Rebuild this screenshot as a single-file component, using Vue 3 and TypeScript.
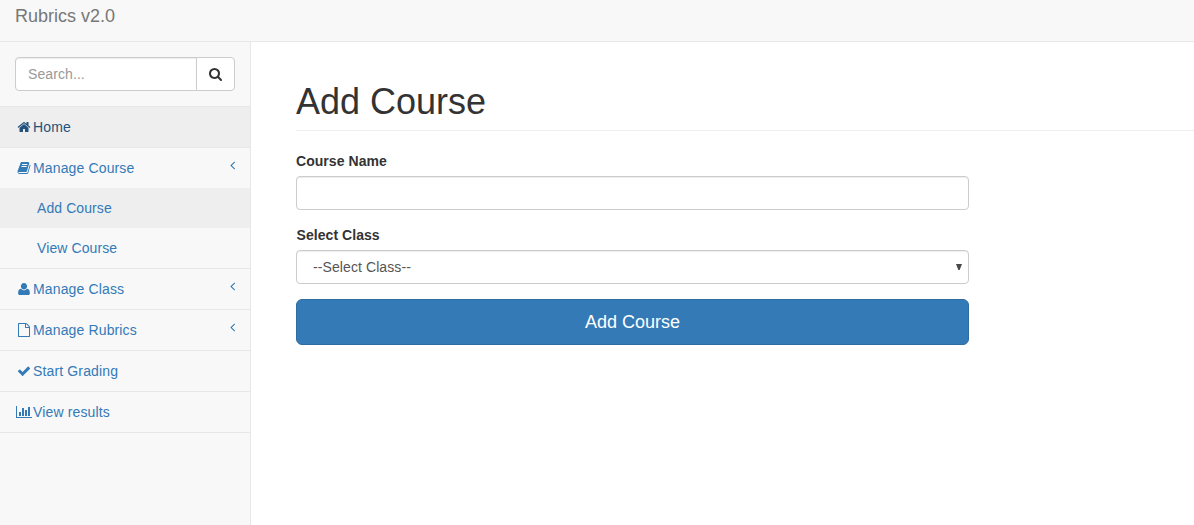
<script setup lang="ts">
import { ref } from 'vue'

interface Icon {
  viewBox: string
  width: number
  path: string
}

interface MenuItem {
  label: string
  icon: Icon
  active?: boolean
  expandable?: boolean
  children?: { label: string; active?: boolean }[]
}

const square = '0 0 1792 1792'

const home: Icon = {
  viewBox: square,
  width: 14,
  path: 'M1472 992v480q0 26-19 45t-45 19h-384v-384h-256v384h-384q-26 0-45-19t-19-45v-480q0-1 .5-3t.5-3l575-474 575 474q1 2 1 6zm223-69l-62 74q-8 9-21 11h-3q-13 0-21-7l-692-577-692 577q-12 8-24 7-13-2-21-11l-62-74q-8-10-7-23.5t11-21.5l719-599q32-26 76-26t76 26l244 204v-195q0-14 9-23t23-9h192q14 0 23 9t9 23v408l219 182q10 8 11 21.5t-7 23.5z',
}
const book: Icon = {
  viewBox: square,
  width: 14,
  path: 'M1703 478q40 57 18 129l-275 906q-19 64-76.5 107.5t-122.5 43.5h-923q-77 0-148.5-53.5t-99.5-131.5q-24-67-2-127 0-4 3-27t4-37q1-8-3-21.5t-3-19.5q2-11 8-21t16.5-23.5 16.5-23.5q23-38 45-91.5t30-91.5q3-10 .5-30t-.5-28q3-11 17-28t17-23q21-36 42-92t25-90q1-9-2.5-32t.5-28q4-13 22-30.5t22-22.5q19-26 42.5-84.5t27.5-96.5q1-8-3-25.5t-2-26.5q2-8 9-18t18-23 17-21q8-12 16.5-30.5t15-35 16-36 19.5-32 26.5-23.5 36-11.5 47.5 5.5l-1 3q38-9 51-9h761q74 0 114 56t18 130l-274 906q-36 119-71.5 153.5t-128.5 34.5h-869q-27 0-38 15-11 16-1 43 24 70 144 70h923q29 0 56-15.5t35-41.5l300-987q7-22 5-57 38 15 59 43zm-1064 2q-4 13 2 22.5t20 9.5h608q13 0 25.5-9.5t16.5-22.5l21-64q4-13-2-22.5t-20-9.5h-608q-13 0-25.5 9.5t-16.5 22.5zm-83 256q-4 13 2 22.5t20 9.5h608q13 0 25.5-9.5t16.5-22.5l21-64q4-13-2-22.5t-20-9.5h-608q-13 0-25.5 9.5t-16.5 22.5z',
}
const user: Icon = {
  viewBox: '0 0 14 14',
  width: 14,
  path: 'M7 1c1.8 0 3.1 1.4 3.1 3.2S8.8 7.5 7 7.5 3.9 6 3.9 4.2 5.2 1 7 1zM4.3 6.7C5 7.7 5.9 8.2 7 8.2s2-.5 2.700-1.500c2.300 0 3.200 1.800 3.200 4.500 0 1.100-.6 1.800-1.600 1.800H2.700c-1 0-1.600-.7-1.600-1.800 0-2.700.9-4.500 3.200-4.500z',
}
const file: Icon = {
  viewBox: square,
  width: 14,
  path: 'M1596 380q28 28 48 76t20 88v1152q0 40-28 68t-68 28h-1344q-40 0-68-28t-28-68v-1600q0-40 28-68t68-28h896q40 0 88 20t76 48zm-444-244v376h376q-10-29-22-41l-313-313q-12-12-41-22zm384 1528v-1024h-416q-40 0-68-28t-28-68v-416h-768v1536h1280z',
}
const check: Icon = {
  viewBox: square,
  width: 14,
  path: 'M1671 566q0 40-28 68l-724 724-136 136q-28 28-68 28t-68-28l-136-136-362-362q-28-28-28-68t28-68l136-136q28-28 68-28t68 28l294 295 656-657q28-28 68-28t68 28l136 136q28 28 28 68z',
}
const chart: Icon = {
  viewBox: '0 0 2048 1792',
  width: 16,
  path: 'M640 896v512h-256v-512h256zm384-512v1024h-256v-1024h256zm1024 1152v128h-2048v-1536h128v1408h1920zm-640-896v768h-256v-768h256zm384-384v1152h-256v-1152h256z',
}

const menu: MenuItem[] = [
  { label: 'Home', icon: home, active: true },
  {
    label: 'Manage Course',
    icon: book,
    expandable: true,
    children: [{ label: 'Add Course', active: true }, { label: 'View Course' }],
  },
  { label: 'Manage Class', icon: user, expandable: true },
  { label: 'Manage Rubrics', icon: file, expandable: true },
  { label: 'Start Grading', icon: check },
  { label: 'View results', icon: chart },
]

const search = ref('')
const courseName = ref('')
const selectedClass = ref('')
</script>

<template>
  <div class="page">
    <header class="navbar"><a class="brand">Rubrics v2.0</a></header>
    <div class="body">
      <nav class="sidebar">
        <div class="search">
          <input v-model="search" class="control search-input" type="text" placeholder="Search..." />
          <button class="search-button" type="button" aria-label="Search">
            <svg width="13" height="14" viewBox="64 0 1664 1792">
              <path d="M1216 832q0-185-131.5-316.5t-316.5-131.5-316.5 131.5-131.5 316.5 131.5 316.5 316.5 131.5 316.5-131.5 131.5-316.5zm512 832q0 52-38 90t-90 38q-54 0-90-38l-343-342q-179 124-399 124-143 0-273.5-55.5t-225-150-150-225-55.5-273.5 55.5-273.5 150-225 225-150 273.5-55.5 273.5 55.5 225 150 150 225 55.5 273.5q0 220-124 399l343 343q37 37 37 90z" />
            </svg>
          </button>
        </div>
        <div v-for="item in menu" :key="item.label" class="item">
          <a class="link" :class="{ active: item.active }">
            <span class="icon">
              <svg :width="item.icon.width" height="14" :viewBox="item.icon.viewBox">
                <path :d="item.icon.path" />
              </svg>
            </span>
            <span>{{ item.label }}</span>
            <svg v-if="item.expandable" class="arrow" width="5" height="14" viewBox="563 0 640 1792">
              <path d="M1203 544q0 13-10 23l-393 393 393 393q10 10 10 23t-10 23l-50 50q-10 10-23 10t-23-10l-466-466q-10-10-10-23t10-23l466-466q10-10 23-10t23 10l50 50q10 10 10 23z" />
            </svg>
          </a>
          <a
            v-for="child in item.children"
            :key="child.label"
            class="sublink"
            :class="{ 'sub-active': child.active }"
          >{{ child.label }}</a>
        </div>
      </nav>
      <main class="content">
        <h1>Add Course</h1>
        <form class="form" @submit.prevent>
          <label for="course-name">Course Name</label>
          <input id="course-name" v-model="courseName" class="control" type="text" />
          <label class="class-label" for="class-select">Select Class</label>
          <div class="select-wrap">
            <select id="class-select" v-model="selectedClass" class="control select">
              <option value="">--Select Class--</option>
            </select>
            <svg class="caret" width="6" height="6" viewBox="0 0 6 6"><path d="M0 0h6L3.6 6H2.4z" /></svg>
          </div>
          <button class="submit" type="submit">Add Course</button>
        </form>
      </main>
    </div>
  </div>
</template>

<style>
body {
  margin: 0;
  background: #fff;
}
</style>

<style scoped>
* {
  box-sizing: border-box;
}
.page {
  display: flex;
  flex-direction: column;
  height: 100vh;
  overflow: hidden;
  color: #333;
  font: 14px/20px "Liberation Sans", Arial, sans-serif;
}
svg {
  display: block;
  fill: currentColor;
}
.navbar {
  flex: none;
  height: 42px;
  padding: 6px 15px;
  background: #f8f8f8;
  border-bottom: 1px solid #e7e7e7;
}
.brand {
  display: block;
  color: #777;
  font-size: 18px;
}
.body {
  display: flex;
  flex: 1;
}
.sidebar {
  flex: none;
  width: 251px;
  background: #f8f8f8;
  border-right: 1px solid #e7e7e7;
}
.search {
  display: flex;
  padding: 15px;
  border-bottom: 1px solid #e7e7e7;
}
.control {
  display: block;
  width: 100%;
  height: 34px;
  margin: 0;
  padding: 6px 12px;
  color: #555;
  background: #fff;
  border: 1px solid #ccc;
  border-radius: 4px;
  box-shadow: inset 0 1px 1px rgba(0, 0, 0, 0.075);
  font: inherit;
  letter-spacing: 0.09px;
  outline: none;
}
.control::placeholder {
  color: #999;
  opacity: 1;
}
.search-input {
  flex: 1;
  width: auto;
  min-width: 0;
  border-radius: 4px 0 0 4px;
}
.search-button {
  display: flex;
  align-items: center;
  width: 39px;
  height: 34px;
  margin: 0 0 0 -1px;
  padding: 0 12px;
  color: #333;
  background: #fff;
  border: 1px solid #ccc;
  border-radius: 0 4px 4px 0;
}
.item {
  border-bottom: 1px solid #e7e7e7;
  letter-spacing: 0.14px;
}
.link {
  display: flex;
  align-items: center;
  height: 40px;
  padding: 0 15px;
  color: #337ab7;
}
.active {
  color: #23527c;
  background: #eee;
}
.icon {
  display: flex;
  justify-content: center;
  width: 18px;
}
.arrow {
  align-self: flex-start;
  margin: 10px 0 0 auto;
}
.sublink {
  display: block;
  padding: 10px 15px 10px 37px;
  color: #337ab7;
  letter-spacing: 0.09px;
}
.sub-active {
  background: #eee;
}
.content {
  flex: 1;
  padding: 40px 0 0 45px;
}
h1 {
  margin: 0 0 20px;
  padding-bottom: 9px;
  border-bottom: 1px solid #eee;
  font-size: 36px;
  font-weight: 500;
  line-height: 39px;
}
.form {
  width: 673px;
}
label {
  display: block;
  margin-bottom: 5px;
  font-weight: 700;
  letter-spacing: 0.05px;
}
.class-label {
  padding-left: 0.6px;
}
.form .control {
  margin-bottom: 15px;
}
.select-wrap {
  position: relative;
}
.select {
  padding-left: 16px;
  appearance: none;
}
.caret {
  position: absolute;
  top: 14px;
  right: 7px;
  color: #484848;
}
.submit {
  display: block;
  width: 100%;
  height: 46px;
  padding: 0;
  color: #fff;
  background: #337ab7;
  border: 1px solid #2e6da4;
  border-radius: 6px;
  font: 18px/24px "Liberation Sans", Arial, sans-serif;
}
</style>
